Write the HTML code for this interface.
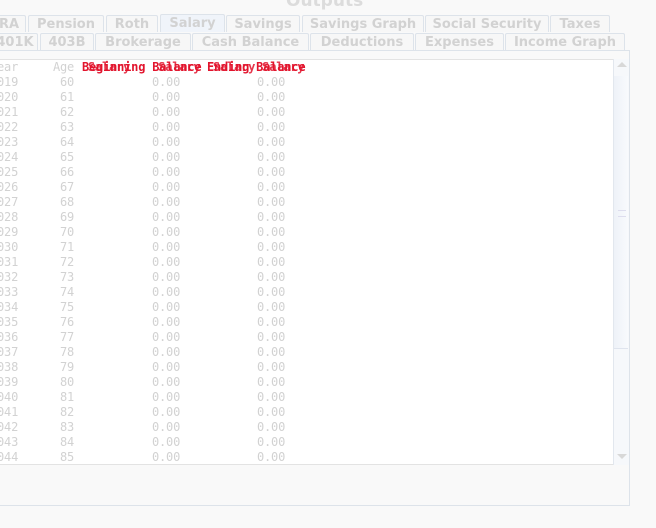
<!DOCTYPE html>
<html><head><style>
body{margin:0;width:656px;height:528px;background:#f9f9f9;position:relative;overflow:hidden;font-family:"DejaVu Sans","Liberation Sans",sans-serif;}
.t{position:absolute;height:17px;border:1px solid #dde3ea;border-bottom:none;background:#f7f7f7;color:#d2d2d2;font-size:13px;font-weight:bold;line-height:17px;text-align:center;box-sizing:border-box;border-radius:2px 2px 0 0;white-space:nowrap;overflow:hidden}
.sel{background:#f0f4fa}
.m{position:absolute;font-family:"DejaVu Sans Mono","Liberation Mono",monospace;font-size:12px;letter-spacing:-0.2px;color:#d2d2d2;white-space:pre;line-height:15px}
.r{position:absolute;font-family:"DejaVu Sans Mono",monospace;font-size:12px;letter-spacing:-0.2px;color:#e2142d;white-space:pre;line-height:15px;font-weight:bold}
</style></head><body>
<div style="position:absolute;left:286px;top:-9px;font-size:17px;font-weight:bold;color:#dcdcdc">Outputs</div>
<div class="t" style="left:-8px;top:15px;width:34px">RA</div>
<div class="t" style="left:28px;top:15px;width:76px">Pension</div>
<div class="t" style="left:106px;top:15px;width:52px">Roth</div>
<div class="t sel" style="left:160px;top:14px;width:65px;height:18px">Salary</div>
<div class="t" style="left:226px;top:15px;width:74px">Savings</div>
<div class="t" style="left:302px;top:15px;width:122px">Savings Graph</div>
<div class="t" style="left:425px;top:15px;width:124px">Social Security</div>
<div class="t" style="left:550px;top:15px;width:60px">Taxes</div>
<div class="t" style="left:-8px;top:33px;width:46px">401K</div>
<div class="t" style="left:40px;top:33px;width:54px">403B</div>
<div class="t" style="left:95px;top:33px;width:96px">Brokerage</div>
<div class="t" style="left:192px;top:33px;width:117px">Cash Balance</div>
<div class="t" style="left:310px;top:33px;width:104px">Deductions</div>
<div class="t" style="left:415px;top:33px;width:89px">Expenses</div>
<div class="t" style="left:505px;top:33px;width:120px">Income Graph</div>
<div style="position:absolute;left:-2px;top:50px;width:632px;height:456px;border:1px solid #dde3ea;box-sizing:border-box;background:#f9f9f9"></div>
<div style="position:absolute;left:0;top:59px;width:613px;height:406px;background:#fff;border-top:1px solid #e3e3e3;border-bottom:1px solid #e3e3e3;box-sizing:border-box"></div>
<div style="position:absolute;left:613px;top:59px;width:16px;height:406px;background:#f6f8fb;border-left:1px solid #e2e7ee;box-sizing:border-box"></div>
<div style="position:absolute;left:614px;top:76px;width:14px;height:272px;background:linear-gradient(90deg,#eef2f8,#f8fafd);border-bottom:1px solid #dfe4ee"></div>
<div style="position:absolute;left:618px;top:210px;width:8px;height:5px;border-top:1px solid #dde;border-bottom:1px solid #dde"></div>
<div style="position:absolute;left:617px;top:62px;width:0;height:0;border-left:5px solid transparent;border-right:5px solid transparent;border-bottom:5px solid #d8d8d8"></div>
<div style="position:absolute;left:617px;top:454px;width:0;height:0;border-left:5px solid transparent;border-right:5px solid transparent;border-top:5px solid #d8d8d8"></div>
<div class="m" style="left:-10px;top:60px">Year</div>
<div class="m" style="left:53px;top:60px">Age</div>
<div class="r" style="left:82px;top:60px">Beginning Balance</div>
<div class="r" style="left:88px;top:60px;opacity:.85">Salary    Salary</div>
<div class="r" style="left:207px;top:60px">Ending Balance</div>
<div class="r" style="left:213px;top:60px;opacity:.85">Salary Salary</div>
<div class="m" id="c1" style="left:-10px;top:75px"></div>
<div class="m" id="c2" style="left:60px;top:75px"></div>
<div class="m" id="c3" style="left:152px;top:75px"></div>
<div class="m" id="c4" style="left:257px;top:75px"></div>
<script>
var a="",b="",c="";for(var i=0;i<26;i++){a+=(2019+i)+"\n";b+=(60+i)+"\n";c+="0.00\n";}
document.getElementById("c1").textContent=a;
document.getElementById("c2").textContent=b;
document.getElementById("c3").textContent=c;
document.getElementById("c4").textContent=c;
</script>
</body></html>
